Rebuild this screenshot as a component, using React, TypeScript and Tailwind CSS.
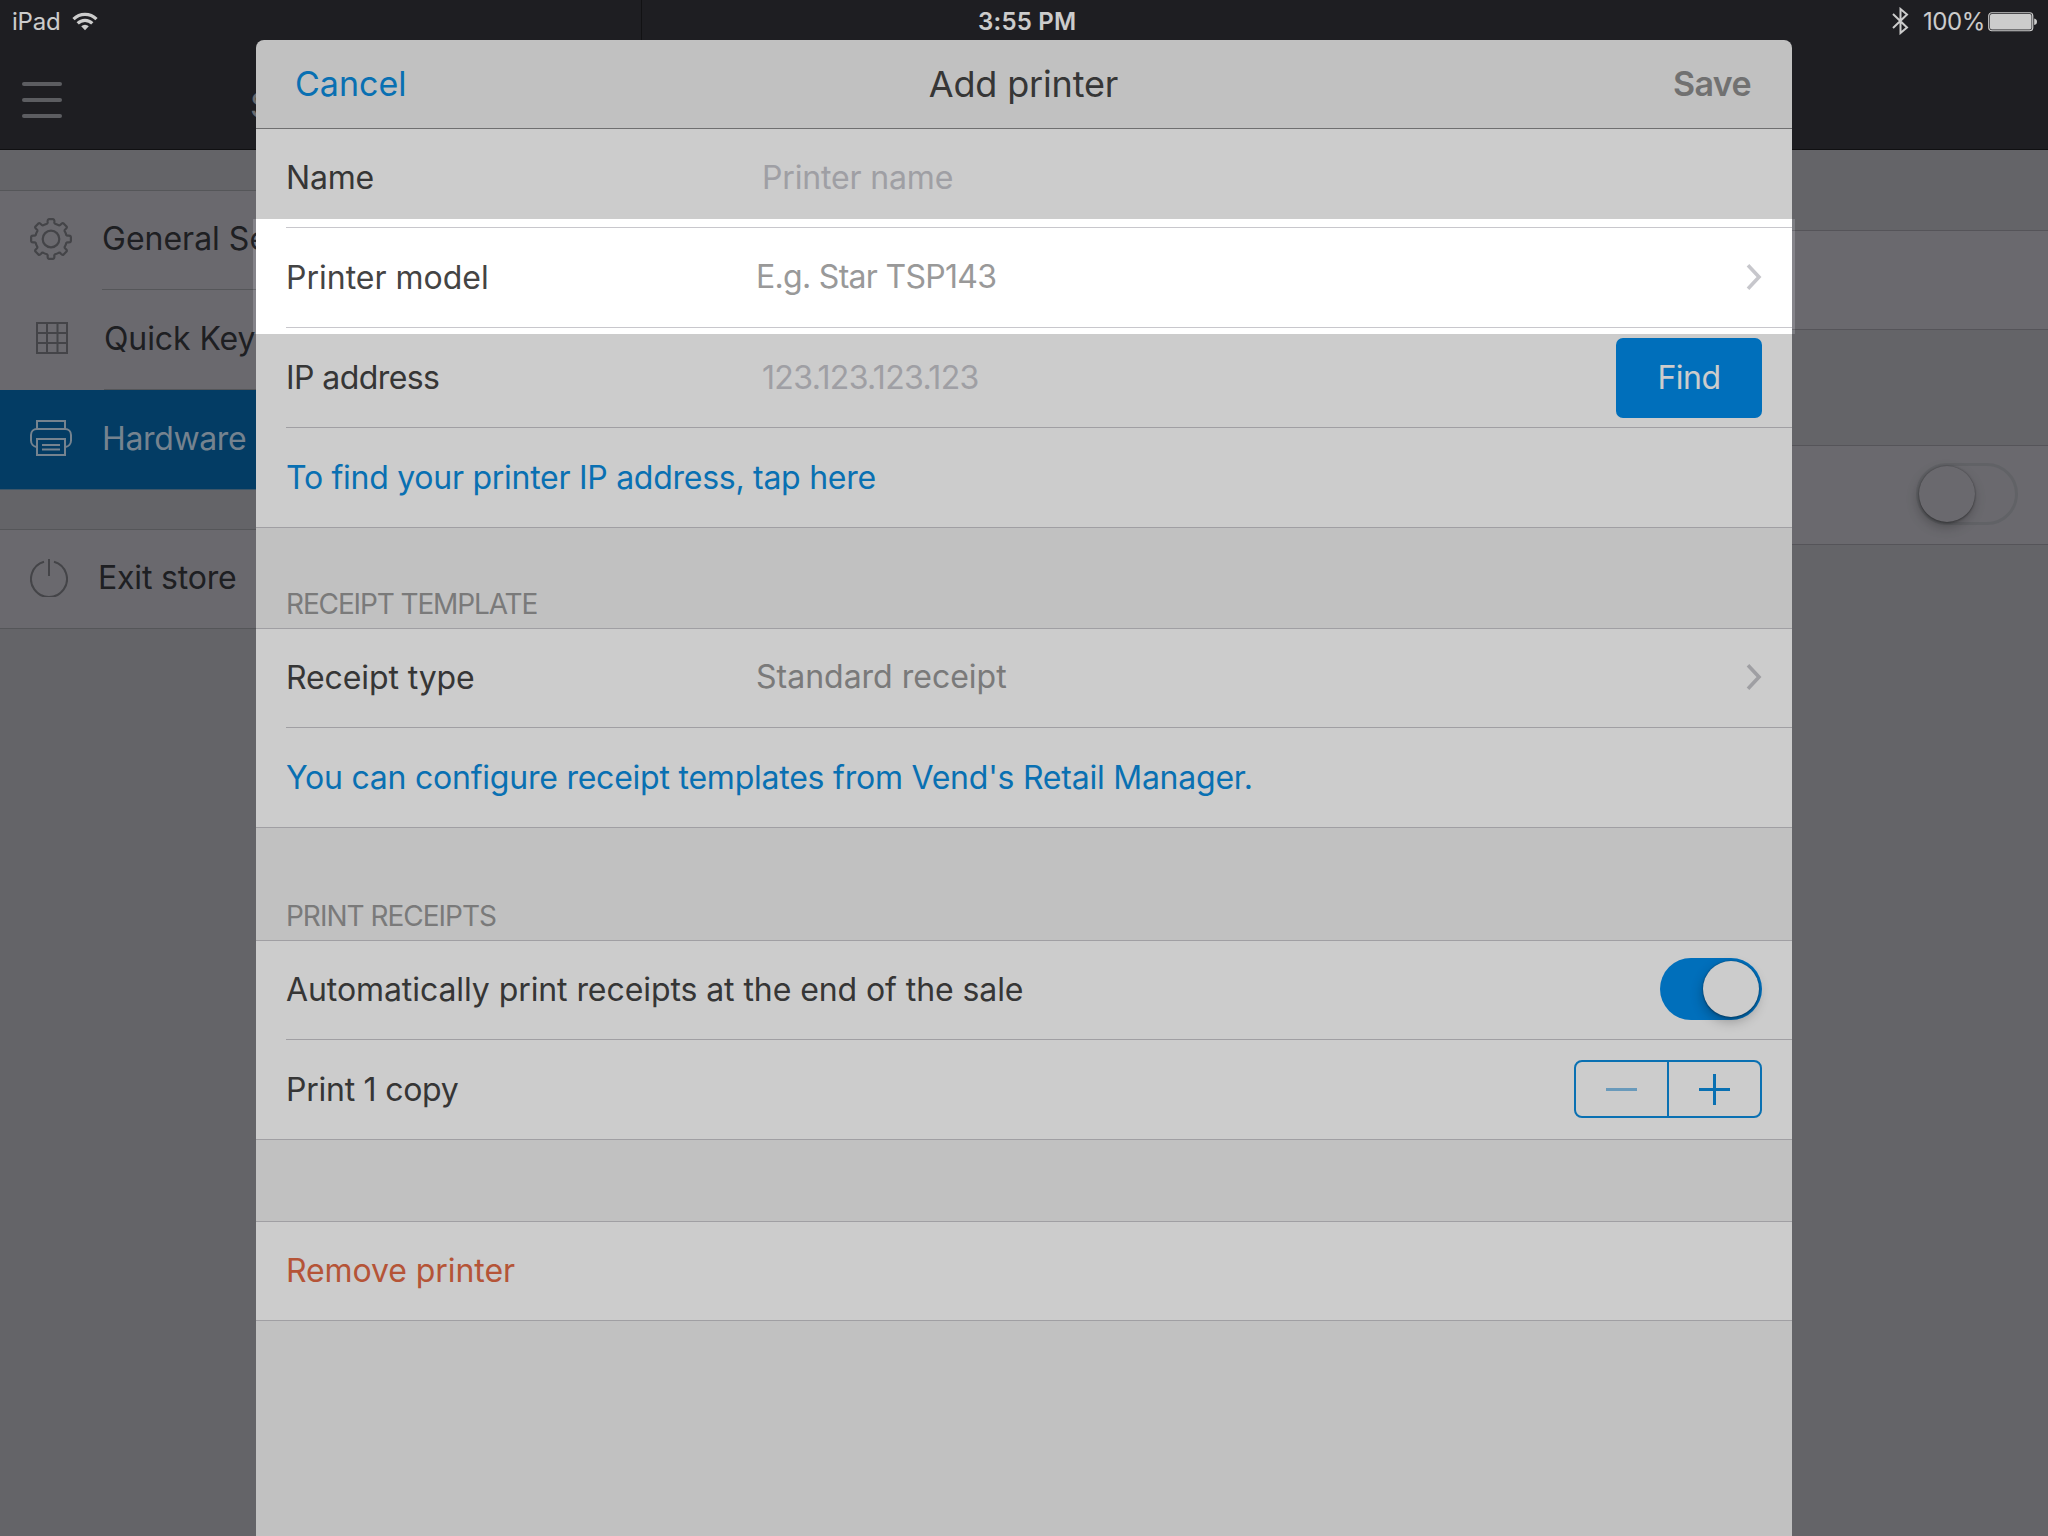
import type { ReactNode } from "react";

function gearPath(cx: number, cy: number) {
  const at = (deg: number, r: number) => {
    const a = ((deg - 90) * Math.PI) / 180;
    return `${(cx + r * Math.cos(a)).toFixed(2)} ${(cy + r * Math.sin(a)).toFixed(2)}`;
  };
  let d = "";
  for (let i = 0; i < 8; i++) {
    const t = i * 45;
    d += `${i === 0 ? "M" : "A15.6 15.6 0 0 1 "}${at(t - 14.5, 15.8)}`;
    d += `Q${at(t - 11, 16.2)} ${at(t - 11, 17.6)}`;
    d += `Q${at(t - 10.5, 20)} ${at(t - 6, 20)}`;
    d += `L${at(t + 6, 20)}`;
    d += `Q${at(t + 10.5, 20)} ${at(t + 11, 17.6)}`;
    d += `Q${at(t + 11, 16.2)} ${at(t + 14.5, 15.8)}`;
  }
  return `${d}A15.6 15.6 0 0 1 ${at(-14.5, 15.8)}Z`;
}

function GearIcon() {
  return (
    <svg width="42" height="42" viewBox="0 0 42 42" fill="none" stroke="#55565a" strokeWidth="2.200" strokeLinejoin="round">
      <path d={gearPath(21, 21)} />
      <circle cx="21" cy="21" r="8.3" />
    </svg>
  );
}

function GridIcon() {
  return (
    <svg width="32" height="32" viewBox="0 0 32 32" fill="none" stroke="#55565a" strokeWidth="2">
      <path d="M1 1h30v30H1zM11 1v30M21.5 1v30M1 11h30M1 21h30" />
    </svg>
  );
}

function PrinterIcon() {
  return (
    <svg width="42" height="36" viewBox="0 0 42 36" fill="none" stroke="#93a4b3" strokeWidth="2">
      <path d="M7 9V1h28v8" />
      <path d="M7 27H6.5C3.5 26.5 1 24 1 20.500V15C1 11.500 3.500 9 7 9h28c3.500 0 6 2.500 6 6v5.500c0 3.500-2.500 6-5.500 6.500H35" />
      <path d="M7 19h28v16H7zM12 25h18M12 29.500h18" />
    </svg>
  );
}

function PowerIcon() {
  return (
    <svg width="38" height="38" viewBox="0 0 38 38" fill="none" stroke="#55565a" strokeWidth="2">
      <path d="M14 2.700A18 18 0 1 0 24 2.700" />
      <path d="M19 0v17" />
    </svg>
  );
}

function WifiIcon() {
  return (
    <svg width="26" height="19" viewBox="0 0 26 19" fill="none" stroke="#fff" strokeWidth="3.200">
      <path d="M1.500 7.200a16.300 16.300 0 0 1 23 0" />
      <path d="M5.700 11.400a10.300 10.300 0 0 1 14.600 0" />
      <path d="M13 18.300l-3.800-4.100a5.400 5.400 0 0 1 7.600 0z" fill="#fff" stroke="none" />
    </svg>
  );
}

function BluetoothIcon() {
  return (
    <svg width="17" height="28" viewBox="0 0 17 28" fill="none" stroke="#fff" strokeWidth="2">
      <path d="M1 7l14 13.500-6.500 5.500V2L15 7.500 1 21" />
    </svg>
  );
}

function BatteryIcon() {
  return (
    <svg width="50" height="20" viewBox="0 0 50 20">
      <rect x="0.750" y="0.750" width="44" height="18" rx="3" fill="none" stroke="#fff" strokeWidth="1.200" />
      <rect x="2" y="2" width="41.500" height="15.500" rx="1.800" fill="#fff" />
      <path d="M46.200 6.500c2 .4 2.800 1.600 2.800 3.300s-.8 2.900-2.800 3.300z" fill="#fff" />
    </svg>
  );
}

function Chevron() {
  return (
    <svg className="mb-[2px]" width="16" height="26" viewBox="0 0 16 26" fill="none" stroke="#c7c7cc" strokeWidth="3.600">
      <path d="M2 1.300L13 13 2 24.700" />
    </svg>
  );
}

function SideItem({ icon, children, className }: { icon: ReactNode; children: ReactNode; className: string }) {
  return (
    <div className={`flex pl-[30px] ${className}`}>
      {icon}
      {children}
    </div>
  );
}

function Row({ children, inset = false, first = false }: { children: ReactNode; inset?: boolean; first?: boolean }) {
  return (
    <div className={`bg-white ${first ? "h-[99px]" : "h-[100px]"} ${inset ? "pl-[30px]" : ""}`}>
      <div className={`flex h-full items-center border-b border-[#c8c7cc] pr-[30px] ${inset ? "" : "pl-[30px]"}`}>{children}</div>
    </div>
  );
}

function Label({ children, className = "" }: { children: ReactNode; className?: string }) {
  return <span className={`whitespace-nowrap ${className}`}>{children}</span>;
}

function SectionTitle({ children, className }: { children: ReactNode; className: string }) {
  return (
    <div className={`flex items-end border-b border-[#c8c7cc] pb-[10px] pl-[30px] text-[28px] leading-none text-[#999999] ${className}`}>
      {children}
    </div>
  );
}

export default function App() {
  return (
    <div className="relative h-[1536px] w-[2048px] overflow-hidden bg-[#7d7e83] font-['Inter',sans-serif] text-[32px] leading-[40px]">
      <header className="flex h-[150px] flex-col border-b border-[#141417] bg-[#26262b]">
        <div className="grid h-[40px] grid-cols-[642px_1fr] text-[24px] text-white">
          <div className="flex items-center border-r border-[#17171a] pl-[12px]">
            <span className="pt-[2px] tracking-[-0.2px]">iPad</span>
            <span className="ml-[11px]"><WifiIcon /></span>
          </div>
          <div className="flex items-center">
            <span className="ml-[336px] pt-[2px] font-semibold tracking-[0.23px]">3:55 PM</span>
            <span className="ml-auto"><BluetoothIcon /></span>
            <span className="ml-[14px] w-[65px] pt-[2px] tracking-[-0.4px]">100%</span>
            <span className="mr-[10px] pt-px"><BatteryIcon /></span>
          </div>
        </div>
        <div className="flex w-[640px] flex-1 pl-[22px]">
          <div className="mt-[42px] flex w-[40px] flex-col gap-[12px]">
            <div className="h-[4px] rounded-full bg-[#74757a]" />
            <div className="h-[4px] rounded-full bg-[#74757a]" />
            <div className="h-[4px] rounded-full bg-[#74757a]" />
          </div>
          <span className="ml-[188px] mt-[45px] text-[34px] text-[#85868b]">Settings</span>
        </div>
      </header>

      <main className="flex h-[1386px]">
        <nav className="w-[640px] text-[#26272b]">
          <div className="h-[41px] border-b border-[#6b6c70]" />
          <SideItem icon={<div className="mt-[27px] w-[72px]"><GearIcon /></div>} className="h-[99px] bg-[#85848a]">
            <div className="flex flex-1 items-center border-b border-[#6b6c70] pb-[2px]">General Settings</div>
          </SideItem>
          <SideItem icon={<div className="mt-[32px] w-[74px] pl-[6px]"><GridIcon /></div>} className="h-[100px] bg-[#85848a]">
            <div className="flex flex-1 items-center border-b border-[#6b6c70] pb-px tracking-[-0.1px]">Quick Keys</div>
          </SideItem>
          <SideItem icon={<div className="mt-[30px] w-[72px]"><PrinterIcon /></div>} className="h-[100px] border-b border-[#4d6c84] bg-[#044b7d]">
            <div className="flex flex-1 items-center pb-px tracking-[-0.36px] text-[#93a4b3]">Hardware</div>
          </SideItem>
          <div className="h-[40px] border-b border-[#6b6c70]" />
          <SideItem icon={<div className="mt-[29px] w-[68px]"><PowerIcon /></div>} className="h-[99px] border-b border-[#6b6c70] bg-[#85848a]">
            <div className="flex flex-1 items-center pb-[2px] tracking-[-0.19px]">Exit store</div>
          </SideItem>
        </nav>
        <section className="flex-1">
          <div className="h-[81px] border-b border-[#6b6a70]" />
          <div className="h-[99px] border-b border-[#6b6a70] bg-[#85848a]" />
          <div className="h-[116px] border-b border-[#6b6a70]" />
          <div className="flex h-[99px] items-center justify-end border-b border-[#6b6a70] bg-[#85848a] pb-[2px] pr-[30px]">
            <div className="flex h-[62px] w-[102px] items-center rounded-full border-[3px] border-[#7a7b80]">
              <div className="mb-px size-[56px] rounded-full bg-[#85848a] shadow-[0_0_2px_rgba(0,0,0,0.4),-1px_5px_12px_rgba(0,0,0,0.25),0_2px_2px_rgba(0,0,0,0.15)]" />
            </div>
          </div>
        </section>
      </main>

      <div className="absolute left-[256px] top-[40px] flex h-[1496px] w-[1536px] flex-col overflow-hidden rounded-t-[8px] bg-[#f2f2f2] text-[#444444]">
        <div className="grid h-[89px] grid-cols-3 items-center border-b border-[#8b8b8c] pl-[39px] pr-[41px] text-[34px]">
          <span className="text-[#0c8ddf]">Cancel</span>
          <span className="pb-px pl-px text-center text-[36px] tracking-[-0.15px]">Add printer</span>
          <span className="text-right font-semibold tracking-[-0.6px] text-[#8e8e8e]">Save</span>
        </div>

        <Row inset first>
          <Label className="w-[476px] tracking-[-0.2px]">Name</Label>
          <Label className="tracking-[-0.16px] text-[#c7c7cd]">Printer name</Label>
        </Row>
        <Row inset>
          <Label className="w-[470px]">Printer model</Label>
          <Label className="flex-1 pb-[2px] tracking-[-0.7px] text-[#999999]">E.g. Star TSP143</Label>
          <Chevron />
        </Row>
        <Row inset>
          <Label className="w-[476px] tracking-[-0.58px]">IP address</Label>
          <Label className="flex-1 tracking-[-0.65px] text-[#c7c7cd]">123.123.123.123</Label>
          <button className="h-[80px] w-[146px] rounded-[7px] bg-[#008bea] tracking-[-0.5px] text-white">Find</button>
        </Row>
        <Row>
          <Label className="tracking-[-0.27px] text-[#0c8ddf]">To find your printer IP address, tap here</Label>
        </Row>

        <SectionTitle className="h-[101px] tracking-[-1.13px]">RECEIPT TEMPLATE</SectionTitle>
        <Row inset first>
          <Label className="w-[470px] tracking-[-0.11px]">Receipt type</Label>
          <Label className="flex-1 pb-[2px] text-[#999999]">Standard receipt</Label>
          <Chevron />
        </Row>
        <Row>
          <Label className="tracking-[-0.23px] text-[#0c8ddf]">You can configure receipt templates from Vend's Retail Manager.</Label>
        </Row>

        <SectionTitle className="h-[113px] tracking-[-1.01px]">PRINT RECEIPTS</SectionTitle>
        <Row inset first>
          <Label className="flex-1 tracking-[-0.08px]">Automatically print receipts at the end of the sale</Label>
          <div className="mb-[2px] flex h-[62px] w-[102px] items-center justify-end rounded-full bg-[#008bea] pr-[3px]">
            <div className="mb-px size-[56px] rounded-full bg-white shadow-[0_0_2px_rgba(0,0,0,0.4),-1px_5px_12px_rgba(0,0,0,0.25),0_2px_2px_rgba(0,0,0,0.15)]" />
          </div>
        </Row>
        <Row>
          <Label className="flex-1 tracking-[-0.25px]">Print 1 copy</Label>
          <div className="mb-px flex h-[58px] w-[188px] rounded-[8px] border-2 border-[#0c8ddf]">
            <div className="flex flex-1 items-center justify-center border-r-2 border-[#0c8ddf]">
              <div className="h-[3px] w-[31px] bg-[#84c1ea]" />
            </div>
            <div className="flex w-[91px] items-center justify-center">
              <svg width="31" height="31" viewBox="0 0 31 31" stroke="#0c8ddf" strokeWidth="3">
                <path d="M0 15.500h31M15.500 0v31" />
              </svg>
            </div>
          </div>
        </Row>

        <div className="h-[82px] border-b border-[#c8c7cc]" />
        <Row first>
          <Label className="tracking-[-0.08px] text-[#e36a45]">Remove printer</Label>
        </Row>
      </div>

      {/* Spotlight over the printer model row; its shadow dims the rest of the screen */}
      <div className="absolute left-[253px] top-[219px] h-[115px] w-[1542px] shadow-[0_0_0_2048px_rgba(0,0,0,0.2)]" />
    </div>
  );
}
